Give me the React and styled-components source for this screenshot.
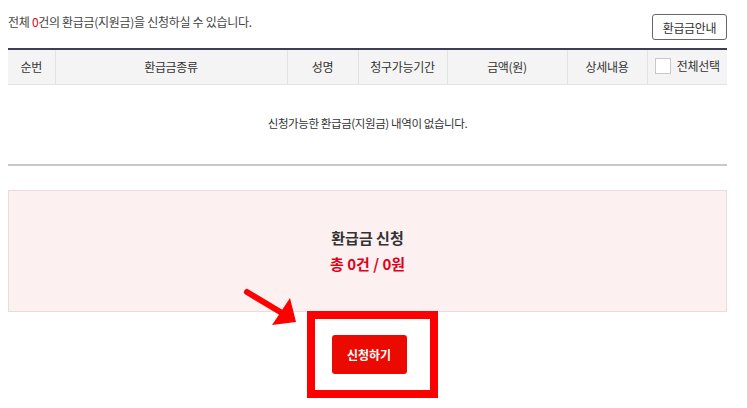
import React from "react";
import styled, { createGlobalStyle } from "styled-components";

const GlobalStyle = createGlobalStyle`
  html, body {
    margin: 0;
    padding: 0;
    background: #fff;
  }
  body {
    font-family: "Noto Sans CJK KR", "Noto Sans", sans-serif;
    color: #333;
  }
  * {
    box-sizing: border-box;
  }
`;

const Page = styled.div`
  width: 747px;
  padding: 0 20px 0 8px;
  position: relative;
`;

const TopBar = styled.div`
  display: flex;
  justify-content: space-between;
  align-items: flex-start;
  padding-top: 14px;
  height: 48px;
`;

const Summary = styled.p`
  margin: 0;
  font-size: 12px;
  line-height: 16px;
  letter-spacing: -0.3px;
  color: #444;
  span {
    color: #e60012;
  }
`;

const GuideButton = styled.button`
  width: 75px;
  height: 26px;
  border: 1px solid #666;
  border-radius: 3px;
  background: #fff;
  font-family: inherit;
  font-size: 12px;
  color: #333;
  padding: 0;
  letter-spacing: -0.3px;
`;

const Table = styled.table`
  width: 719px;
  border-collapse: collapse;
  table-layout: fixed;
  border-top: 2px solid #3d3d55;
  border-bottom: 2px solid #c8c8cc;
`;

const Th = styled.th`
  width: ${(p) => (p.$w ? `${p.$w}px` : "auto")};
  height: 35px;
  padding: 0;
  background: #f4f4f4;
  font-size: 12px;
  font-weight: 400;
  color: #333;
  letter-spacing: -0.3px;
  white-space: nowrap;
  border-bottom: 1px solid #e2e2e2;
  border-left: ${(p) => (p.$first ? "none" : "1px solid #e2e2e2")};
`;

const CheckLabel = styled.label`
  display: inline-flex;
  align-items: center;
  gap: 6px;
`;

const CheckBox = styled.span`
  width: 16px;
  height: 16px;
  border: 1px solid #c8c8c8;
  background: #fff;
`;

const EmptyCell = styled.td`
  height: 81px;
  text-align: center;
  font-size: 11.5px;
  letter-spacing: -0.4px;
  color: #333;
  padding: 0 0 2px;
`;

const ApplyBox = styled.div`
  margin-top: 24px;
  height: 122px;
  border: 1px solid #e8dcdc;
  background: #fdf0f0;
  display: flex;
  flex-direction: column;
  align-items: center;
  justify-content: center;
  gap: 4px;
`;

const ApplyTitle = styled.strong`
  font-size: 15px;
  line-height: 22px;
  font-weight: 700;
  color: #333;
`;

const ApplyTotal = styled.strong`
  font-size: 15px;
  line-height: 22px;
  font-weight: 700;
  color: #e0001b;
`;

const ActionRow = styled.div`
  display: flex;
  justify-content: center;
  padding-left: 9px;
  margin-top: -1px;
`;

const Highlight = styled.div`
  width: 131px;
  height: 87px;
  border: 8px solid #ff0000;
  display: flex;
  align-items: center;
  justify-content: center;
  padding-right: 6px;
`;

const SubmitButton = styled.button`
  width: 75px;
  height: 39px;
  border: none;
  border-radius: 3px;
  background: #ec0a00;
  color: #fff;
  font-family: inherit;
  font-size: 12px;
  font-weight: 700;
  padding: 0;
`;

const Arrow = styled.svg`
  position: absolute;
  left: 238px;
  top: 284px;
`;

const columns = [
  { label: "순번", w: 47 },
  { label: "환급금종류", w: 232 },
  { label: "성명", w: 71 },
  { label: "청구가능기간", w: 89 },
  { label: "금액(원)", w: 120 },
  { label: "상세내용", w: 80 },
];

export default function App() {
  return (
    <Page>
      <GlobalStyle />
      <TopBar>
        <Summary>
          전체 <span>0</span>건의 환급금(지원금)을 신청하실 수 있습니다.
        </Summary>
        <GuideButton>환급금안내</GuideButton>
      </TopBar>
      <Table>
        <thead>
          <tr>
            {columns.map((c, i) => (
              <Th key={c.label} $w={c.w} $first={i === 0}>
                {c.label}
              </Th>
            ))}
            <Th>
              <CheckLabel>
                <CheckBox />
                전체선택
              </CheckLabel>
            </Th>
          </tr>
        </thead>
        <tbody>
          <tr>
            <EmptyCell colSpan={7}>신청가능한 환급금(지원금) 내역이 없습니다.</EmptyCell>
          </tr>
        </tbody>
      </Table>
      <ApplyBox>
        <ApplyTitle>환급금 신청</ApplyTitle>
        <ApplyTotal>총 0건 / 0원</ApplyTotal>
      </ApplyBox>
      <ActionRow>
        <Highlight>
          <SubmitButton>신청하기</SubmitButton>
        </Highlight>
      </ActionRow>
      <Arrow width="64" height="48" viewBox="0 0 64 48">
        <line x1="9" y1="8" x2="44" y2="29" stroke="#ff0000" strokeWidth="6" strokeLinecap="round" />
        <polygon points="52,14 58,38 34,41" fill="#ff0000" />
      </Arrow>
    </Page>
  );
}
